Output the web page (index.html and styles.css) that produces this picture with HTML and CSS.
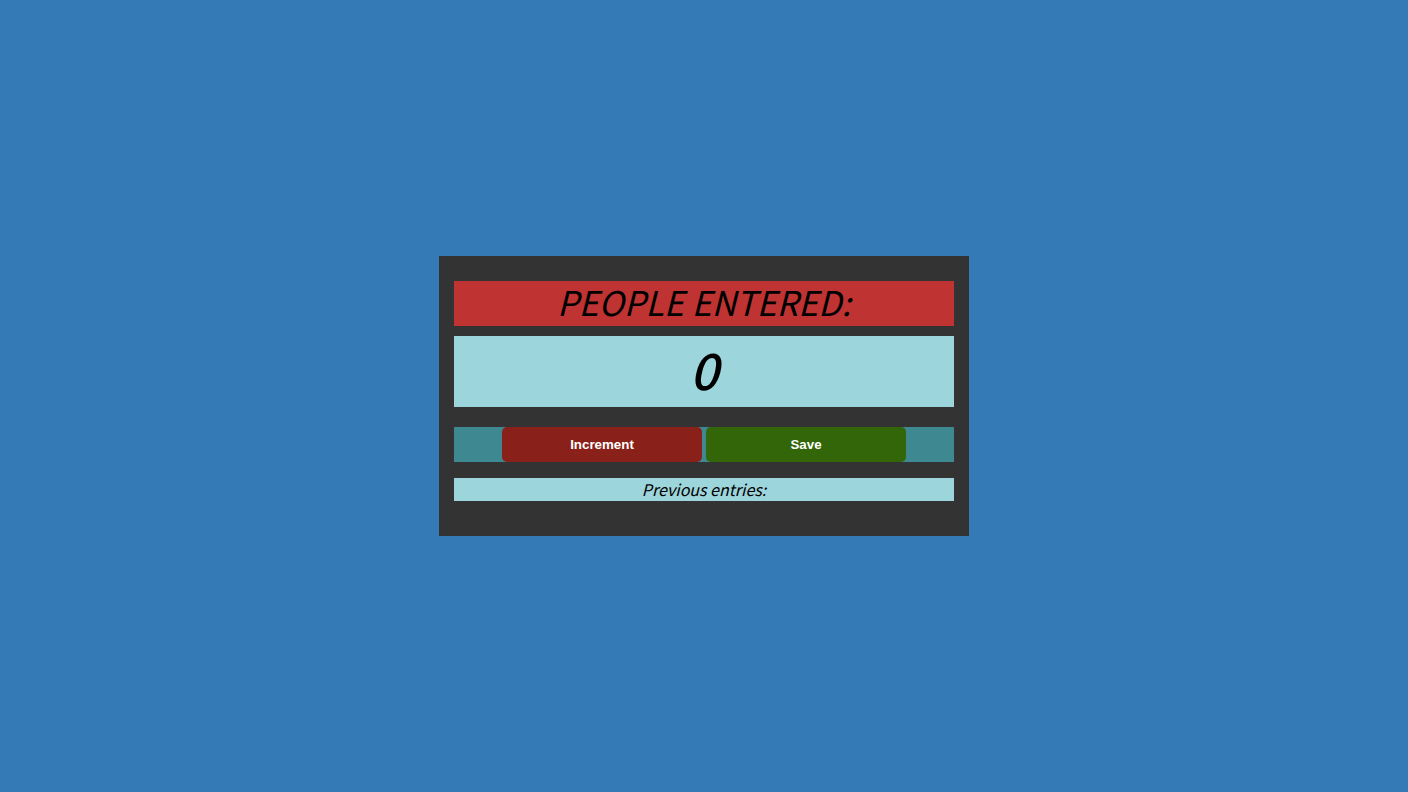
FILE: index.html
```html
<!DOCTYPE html>
<html lang="en">
<head>
<meta charset="utf-8">
<meta name="viewport" content="width=device-width, initial-scale=1">
<title>People Counter</title>
<link rel="stylesheet" href="styles.css">
</head>
<body>
<main class="counter">
<h1 class="title">PEOPLE ENTERED:</h1>
<h2 class="count" id="count">0</h2>
<div class="actions">
<button class="btn increment" type="button">Increment</button>
<button class="btn save" type="button">Save</button>
</div>
<p class="entries">Previous entries:</p>
</main>
</body>
</html>
```
FILE: styles.css
```css
* {
  box-sizing: border-box;
}

body {
  margin: 0;
  min-height: 100vh;
  display: flex;
  align-items: center;
  justify-content: center;
  background: #337ab7;
  font-family: "Noto Sans CJK SC", "Noto Sans", sans-serif;
  font-style: italic;
  text-align: center;
  color: #000;
}

.counter {
  width: 100%;
  max-width: 530px;
  padding: 25px 15px 35px;
  background: #333;
}

.title {
  margin: 0 0 10px;
  padding-bottom: 4px;
  background: #bf3332;
  font-size: 34px;
  font-weight: 400;
  line-height: 41px;
}

.count {
  margin: 0 0 20px;
  padding-bottom: 6px;
  background: #9dd5dc;
  font-size: 50px;
  font-weight: 500;
  line-height: 65px;
}

.actions {
  display: flex;
  justify-content: center;
  gap: 4px;
  margin-bottom: 16px;
  background: #3d8891;
}

.btn {
  flex: 0 1 200px;
  padding: 10px 0;
  border: 0;
  border-radius: 5px;
  color: #fff;
  font-family: "Liberation Sans", Arial, sans-serif;
  font-weight: 700;
  line-height: 15px;
  cursor: pointer;
}

.increment {
  background: #89211a;
}

.save {
  background: #326608;
}

.entries {
  margin: 0;
  background: #9dd5dc;
  font-size: 16px;
  line-height: 23px;
}
```
